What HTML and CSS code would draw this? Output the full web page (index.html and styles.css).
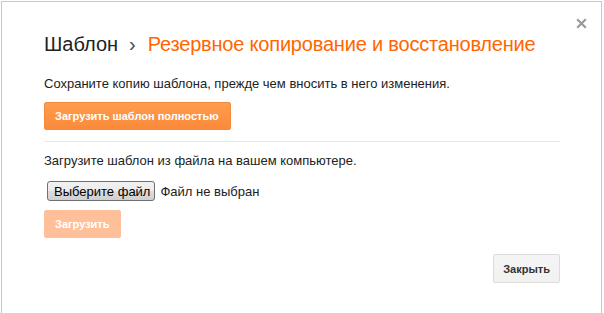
FILE: index.html
```html
<!DOCTYPE html>
<html lang="ru">
<head>
<meta charset="utf-8">
<title>Резервное копирование и восстановление</title>
<link rel="stylesheet" href="styles.css">
</head>
<body>
<div class="dialog">
  <button class="close-x" aria-label="Закрыть">
    <svg width="11" height="11" viewBox="0 0 11 11"><path d="M1.2 1.2 L9.8 9.8 M9.8 1.2 L1.2 9.8" stroke="#9a9a9a" stroke-width="2.2" fill="none"/></svg>
  </button>
  <h1 class="title"><span class="crumb">Шаблон</span><span class="sep">›</span><span class="current">Резервное копирование и восстановление</span></h1>
  <p class="text first">Сохраните копию шаблона, прежде чем вносить в него изменения.</p>
  <button class="btn btn-orange">Загрузить шаблон полностью</button>
  <div class="divider"></div>
  <p class="text second">Загрузите шаблон из файла на вашем компьютере.</p>
  <div class="file-row">
    <span class="file-btn">Выберите файл</span>
    <span class="file-name">Файл не выбран</span>
  </div>
  <button class="btn btn-orange disabled">Загрузить</button>
  <div class="footer">
    <button class="btn btn-gray">Закрыть</button>
  </div>
</div>
</body>
</html>
```
FILE: styles.css
```css
html, body {
  margin: 0;
  padding: 0;
  background: #fff;
  overflow: hidden;
}
body {
  font-family: Arial, "Liberation Sans", sans-serif;
  color: #222;
}
.dialog {
  position: relative;
  box-sizing: border-box;
  width: 601px;
  height: 340px;
  margin: 1px 0 0 1px;
  border: 1px solid #c8c8c8;
  padding: 30px 41px 0 42px;
  display: flex;
  flex-direction: column;
  align-items: flex-start;
}
.close-x {
  position: absolute;
  left: 574px;
  top: 16px;
  width: 11px;
  height: 11px;
  padding: 0;
  border: 0;
  background: none;
  display: block;
}
.close-x svg { display: block; }
.title {
  margin: 0;
  font-size: 20px;
  line-height: 24px;
  font-weight: normal;
  color: #222;
  white-space: nowrap;
}
.sep {
  display: inline-block;
  margin: 0 12px 0 11px;
  color: #444;
}
.current {
  color: #ff6600;
  letter-spacing: -0.2px;
}
.text {
  margin: 0;
  font-size: 13px;
  line-height: 16px;
  color: #222;
}
.text.first { margin-top: 20px; }
.btn {
  box-sizing: border-box;
  height: 28px;
  padding: 0 10px;
  font-family: Arial, "Liberation Sans", sans-serif;
  font-size: 11px;
  font-weight: bold;
  border-radius: 2px;
  cursor: default;
}
.btn-orange {
  margin-top: 10px;
  padding: 0 11px 0 10px;
  color: #fff;
  border: 1px solid #f28a3e;
  background: linear-gradient(#ff9d4e, #fb8a3a);
}
.btn-orange.disabled {
  margin-top: 9px;
  padding: 0 10px;
  border-color: #ffc19c;
  background: #ffbf99;
  color: #fff;
}
.divider {
  align-self: stretch;
  height: 1px;
  margin-top: 11px;
  background: #e8e8e8;
}
.text.second { margin-top: 11px; }
.file-row {
  margin-top: 12px;
  display: flex;
  align-items: center;
  height: 20px;
  padding-left: 3px;
}
.file-btn {
  box-sizing: border-box;
  height: 20px;
  padding: 0 4px 0 6px;
  display: flex;
  align-items: center;
  font-size: 13px;
  color: #000;
  border: 1px solid #707070;
  border-radius: 3px;
  background: linear-gradient(#f2f2f2 0%, #ebebeb 50%, #dddddd 51%, #cfcfcf 100%);
}
.file-name {
  margin-left: 5px;
  font-size: 13px;
  color: #222;
}
.footer {
  align-self: stretch;
  display: flex;
  justify-content: flex-end;
  margin-top: 16px;
}
.btn-gray {
  height: 29px;
  color: #333;
  border: 1px solid #dcdcdc;
  background: linear-gradient(#f5f5f5, #f1f1f1);
  padding: 0 9px;
}
```
